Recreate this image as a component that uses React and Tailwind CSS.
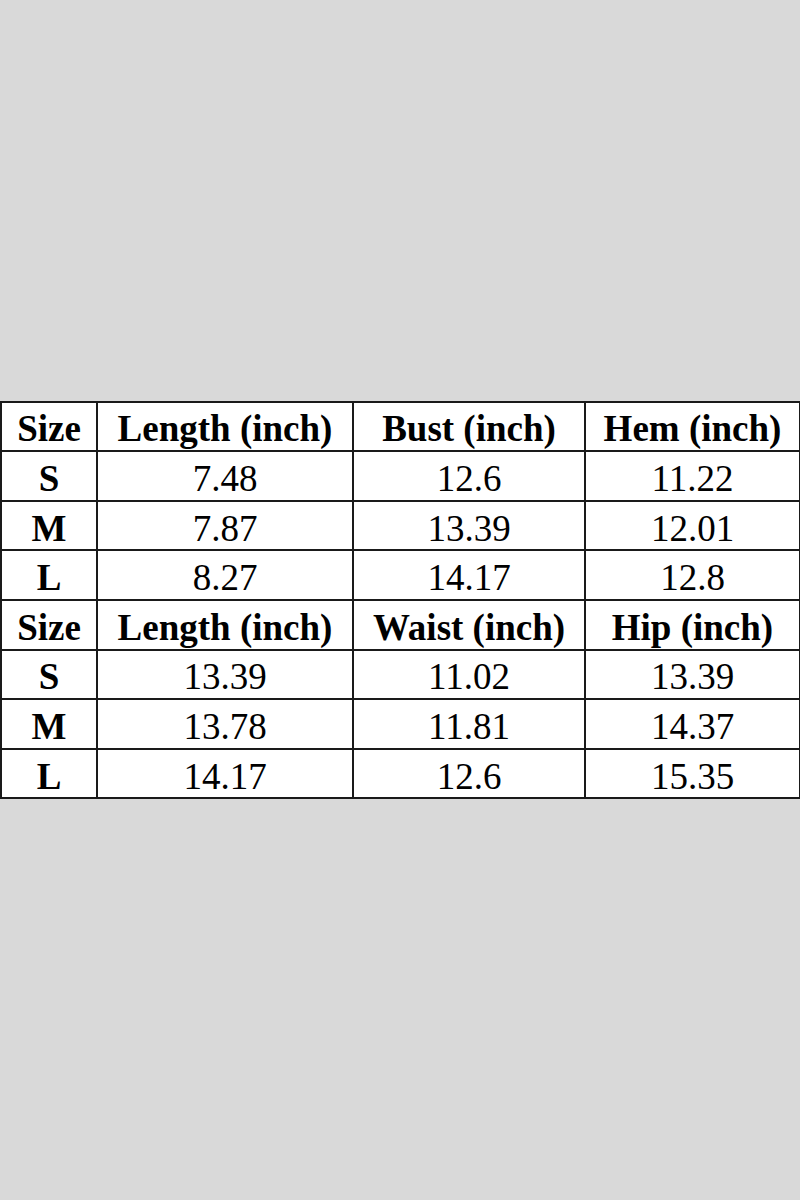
const rows1 = [
  ["S", "7.48", "12.6", "11.22"],
  ["M", "7.87", "13.39", "12.01"],
  ["L", "8.27", "14.17", "12.8"],
];

const rows2 = [
  ["S", "13.39", "11.02", "13.39"],
  ["M", "13.78", "11.81", "14.37"],
  ["L", "14.17", "12.6", "15.35"],
];

function HeadRow({ cols }) {
  return (
    <tr className="h-[49.6px]">
      {cols.map((c, i) => (
        <td key={i} className="border-2 border-[#1a1a1a] p-0 pt-[5px] text-center font-bold leading-none">
          {c}
        </td>
      ))}
    </tr>
  );
}

function DataRow({ row }) {
  return (
    <tr className="h-[49.6px]">
      {row.map((c, i) => (
        <td
          key={i}
          className={
            "border-2 border-[#1a1a1a] p-0 pt-[5px] text-center leading-none " + (i === 0 ? "font-bold" : "")
          }
        >
          {c}
        </td>
      ))}
    </tr>
  );
}

export default function App() {
  return (
    <div className="h-[1200px] w-[800px] bg-[#d9d9d9] flex flex-col justify-center">
      <table
        className="w-[799px] table-fixed border-collapse bg-white text-black text-[37px]"
        style={{ fontFamily: '"Liberation Serif", "Times New Roman", serif' }}
      >
        <colgroup>
          <col className="w-[96px]" />
          <col className="w-[256px]" />
          <col className="w-[232px]" />
          <col className="w-[215px]" />
        </colgroup>
        <tbody>
          <HeadRow cols={["Size", "Length (inch)", "Bust (inch)", "Hem (inch)"]} />
          {rows1.map((r) => (
            <DataRow key={"a" + r[0]} row={r} />
          ))}
          <HeadRow cols={["Size", "Length (inch)", "Waist (inch)", "Hip (inch)"]} />
          {rows2.map((r) => (
            <DataRow key={"b" + r[0]} row={r} />
          ))}
        </tbody>
      </table>
    </div>
  );
}
